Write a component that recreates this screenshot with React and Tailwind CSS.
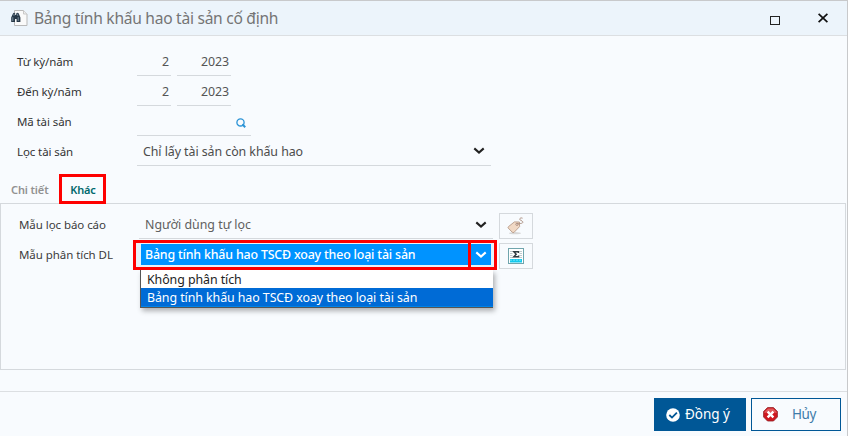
import React from "react";

function Binoculars() {
  return (
    <svg width="17" height="18" viewBox="0 0 17 18" className="shrink-0">
      <path d="M3.5 1.5H12.5L16 5V16.5H3.5Z" fill="#fafafa" stroke="#b9b9b9" />
      <path d="M12.5 1.5V5H16" fill="#eee" stroke="#c8c8c8" />
      <path d="M2 4.5Q3 3 4.2 4.5V6H5.2V4.5Q6.5 3 7.8 4.5L9.4 8.5V13H5.6V10H4V13H0.2V8.5Z" fill="#263746" />
      <path d="M1.8 8.2V12M7.2 8.2V12M3 4.8V6.8M6.7 4.8V6.8" stroke="#8fa3b3" strokeWidth=".8" />
    </svg>
  );
}

function Chevron({ className }) {
  return (
    <svg width="12" height="8" viewBox="0 0 12 8" className={className} fill="none" stroke="currentColor" strokeWidth="2.1">
      <path d="M1.3 1.4L6 5.5L10.7 1.4" />
    </svg>
  );
}

function Search() {
  return (
    <svg width="10" height="10" viewBox="0 0 10 10" fill="none" stroke="#2b93d6" className="shrink-0">
      <circle cx="4.5" cy="4.4" r="3.6" strokeWidth="1.3" />
      <path d="M6.4 6.3L9.2 9.2" strokeWidth="2" />
    </svg>
  );
}

function Tag() {
  return (
    <svg width="18" height="18" viewBox="0 0 18 18">
      <ellipse cx="8" cy="16.2" rx="6" ry="1.1" fill="#d8d8d8" />
      <path d="M1.4 9.7L7.4 4.9L12.4 5L12.6 9.6L7 15.4Q6 16 5.2 15.2L1.2 11Q.7 10.3 1.4 9.7Z" fill="#f1d9c5" stroke="#b79b89" strokeWidth=".9" />
      <circle cx="10" cy="7.3" r="1.1" fill="#fff" stroke="#98705d" strokeWidth=".8" />
      <path d="M10 7C12 6.2 16.4 7 15.8 4.8C15.3 3.4 12 3.4 12.8 1.7Q13.7.2 15.6 1.2" fill="none" stroke="#aa8e80" strokeWidth=".9" />
    </svg>
  );
}

function Sigma() {
  return (
    <svg width="16" height="16" viewBox="0 0 16 16">
      <rect x=".5" y=".5" width="15" height="15" fill="#fff" stroke="#70a5ad" />
      <path d="M2 3.5H14M2 5.5H14M2 7.5H14M2 9.5H14" stroke="#aebdc0" strokeWidth=".8" />
      <rect x="2" y="11" width="12" height="3.5" fill="#14c8ec" />
      <path d="M2 12.2H14" stroke="#6be5fa" strokeDasharray="2 1" />
      <rect x="4.5" y="3" width="7" height="6.5" fill="#fff" />
      <path d="M10.5 5V3.7H5.8L8.2 6.2L5.8 8.7H10.6V7.4" fill="none" stroke="#303b40" strokeWidth="1.4" />
    </svg>
  );
}

function Check() {
  return (
    <svg width="14" height="14" viewBox="0 0 14 14" className="shrink-0">
      <circle cx="7" cy="7" r="6.8" fill="#fff" />
      <path d="M3.3 7L6 9.6L10.9 4.6" fill="none" stroke="#005796" strokeWidth="1.8" />
    </svg>
  );
}

function Stop() {
  return (
    <svg width="15" height="15" viewBox="0 0 15 15" className="shrink-0">
      <path d="M4.5.6H10.5L14.4 4.5V10L10.5 14H4.5L.6 10V4.5Z" fill="#cf1820" stroke="#8e2025" strokeWidth=".8" />
      <path d="M4.9 1.4H10.1L13.5 4.8V6Q7 4 1.5 6V4.8Z" fill="#e05a5c" />
      <path d="M4.6 4.6L10.4 10.4M10.4 4.6L4.6 10.4" stroke="#fff" strokeWidth="2.4" />
    </svg>
  );
}

function PeriodRow({ label }) {
  return (
    <div className="flex h-[30px]">
      <div className="w-[120px] pt-[4px] text-[11.5px] leading-[24px] tracking-[-0.1px] text-[#333]">{label}</div>
      <div className="h-[30px] w-[34px] border-b border-[#d5d9dd] pr-[2px] pt-[3px] text-right text-[12.4px] leading-[25px] text-[#555]">2</div>
      <div className="ml-[6px] h-[30px] w-[54px] border-b border-[#d5d9dd] pr-[2px] pt-[3px] text-right text-[12.4px] leading-[25px] tracking-[-0.1px] text-[#555]">2023</div>
    </div>
  );
}

export default function App() {
  return (
    <div className="flex h-[436px] w-[848px] flex-col whitespace-nowrap border-r border-t border-[#c8c9cb] bg-[#f8fbfe] font-['Noto_Sans','Open_Sans',sans-serif]">
      <header className="flex h-[35px] shrink-0 items-center border-b border-[#dcdfe2] bg-[#ecf4fb] pl-[11px]">
        <Binoculars />
        <h1 className="ml-[6px] pt-[2px] text-[15.6px] tracking-[-0.28px] text-[#757575]">Bảng tính khấu hao tài sản cố định</h1>
        <svg width="10" height="10" viewBox="0 0 10 10" className="ml-auto mr-[38px] mt-[5px]"><rect x=".5" y=".5" width="9" height="8" fill="none" stroke="#222" /></svg>
        <svg width="10" height="10" viewBox="0 0 10 10" className="mr-[19px]"><path d="M.6.8L9.4 9.2M9.4.8L.6 9.2" stroke="#111" strokeWidth="1.7" /></svg>
      </header>
      <section className="shrink-0 pl-[17px] pt-[10px]">
        <PeriodRow label="Từ kỳ/năm" />
        <PeriodRow label="Đến kỳ/năm" />
        <div className="flex h-[30px]">
          <div className="w-[120px] pt-[4px] text-[11.5px] leading-[24px] tracking-[-0.1px] text-[#333]">Mã tài sản</div>
          <div className="flex h-[30px] w-[114px] items-center justify-end border-b border-[#d5d9dd] pr-[5px] pt-[4px]"><Search /></div>
        </div>
        <div className="flex h-[30px]">
          <div className="w-[120px] pt-[4px] text-[11.5px] leading-[24px] tracking-[-0.1px] text-[#333]">Lọc tài sản</div>
          <div className="flex h-[30px] w-[354px] items-center justify-between border-b border-[#d5d9dd] pl-[6px] pr-[6px] pt-px text-[12.4px] tracking-[-0.06px] text-[#4c4c4c]"><span className="pt-[3px]">Chỉ lấy tài sản còn khấu hao</span><Chevron className="text-[#222]" /></div>
        </div>
      </section>
      <nav className="flex h-[37px] shrink-0 items-end text-[11px] font-semibold">
        <div className="ml-[11px] flex h-[28px] w-[48px] items-center pt-[2px] tracking-[-0.12px] text-[#919191]">Chi tiết</div>
        <div className="relative z-10 -mb-px flex h-[30px] w-[47px] items-center justify-center border-[3px] border-[#fe0000] pl-px pt-[2px] tracking-[-0.2px] text-[#00696d]">Khác</div>
      </nav>
      <main className="h-[167px] w-[846px] shrink-0 border border-[#d5d9dd] pt-[6px]">
        <div className="flex h-[30px]">
          <div className="w-[119px] pl-[18px] pt-[3px] text-[11.5px] leading-[24px] tracking-[-0.06px] text-[#3c3c3c]">Mẫu lọc báo cáo</div>
          <div className="ml-[19px] flex h-[29px] w-[354px] items-center justify-between border-b border-[#d5d9dd] pl-[6px] pr-[6px] pt-px text-[12.4px] text-[#606060]"><span className="pt-[2px]">Người dùng tự lọc</span><Chevron className="text-[#222]" /></div>
          <button className="ml-[6px] mt-[3px] flex h-[26px] w-[34px] items-center justify-center border border-[#d5d9dd]"><Tag /></button>
        </div>
        <div className="flex h-[30px]">
          <div className="w-[119px] pl-[18px] pt-[3px] text-[11.5px] leading-[24px] tracking-[-0.06px] text-[#3c3c3c]">Mẫu phân tích DL</div>
          <div className="relative ml-[13px] h-[30px] w-[364px]">
            <div className="flex h-[30px] w-[364px] border-[3px] border-[#fe0000] bg-[#e8f2f8]">
              <div className="ml-[5px] mt-px flex h-[21px] w-[327px] items-center bg-[#0093ff] pl-[4px] pt-[2px] text-[12.4px] font-medium tracking-[-0.17px] text-white">Bảng tính khấu hao TSCĐ xoay theo loại tài sản</div>
              <div className="h-[24px] w-[3px] bg-[#fe0000]" />
              <div className="mt-px flex h-[21px] w-[20px] items-center justify-center bg-[#0093ff] text-white"><Chevron className="text-white" /></div>
            </div>
            <ul className="absolute left-[7px] top-[30px] h-[38px] w-[353px] border-b border-l border-[#555] bg-white text-[12.4px] tracking-[-0.07px] shadow-[2px_3px_5px_rgba(0,0,0,.3)]">
              <li className="flex h-[18px] items-center pl-[6px] pt-[2px] text-[#222]">Không phân tích</li>
              <li className="flex h-[19px] items-center border-b border-[#0083e8] bg-[#006bd6] pl-[6px] pt-[2px] text-white">Bảng tính khấu hao TSCĐ xoay theo loại tài sản</li>
            </ul>
          </div>
          <button className="ml-[2px] mt-[3px] flex h-[26px] w-[34px] items-center justify-center border border-[#d5d9dd]"><Sigma /></button>
        </div>
      </main>
      <footer className="mt-[21px] flex h-[45px] shrink-0 justify-end border-t border-[#dcdfe2] pr-[6px] pt-[6px]">
        <button className="flex h-[33px] w-[92px] items-center bg-[#005796] pl-[12px] text-[13.5px] text-white"><Check /><span className="ml-[5px] tracking-[-0.05px]">Đồng ý</span></button>
        <button className="ml-[5px] flex h-[33px] w-[90px] items-center border border-[#005796] bg-[#f8fbfe] pl-[11px] text-[13.5px] text-[#3f7ba9]"><Stop /><span className="ml-[14px] tracking-[-0.4px]">Hủy</span></button>
      </footer>
    </div>
  );
}
